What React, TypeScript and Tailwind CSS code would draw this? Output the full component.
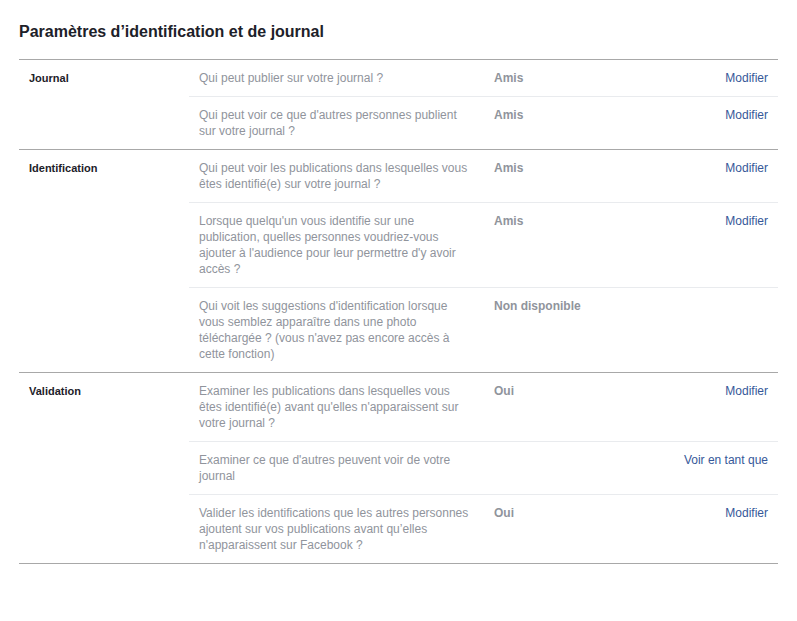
import React from "react";

type Row = { q: string; v?: string; a?: string };
type Section = { label: string; rows: Row[] };

const sections: Section[] = [
  {
    label: "Journal",
    rows: [
      { q: "Qui peut publier sur votre journal ?", v: "Amis", a: "Modifier" },
      { q: "Qui peut voir ce que d'autres personnes publient sur votre journal ?", v: "Amis", a: "Modifier" },
    ],
  },
  {
    label: "Identification",
    rows: [
      { q: "Qui peut voir les publications dans lesquelles vous êtes identifié(e) sur votre journal ?", v: "Amis", a: "Modifier" },
      {
        q: "Lorsque quelqu'un vous identifie sur une publication, quelles personnes voudriez-vous ajouter à l'audience pour leur permettre d'y avoir accès ?",
        v: "Amis",
        a: "Modifier",
      },
      {
        q: "Qui voit les suggestions d'identification lorsque vous semblez apparaître dans une photo téléchargée ? (vous n'avez pas encore accès à cette fonction)",
        v: "Non disponible",
      },
    ],
  },
  {
    label: "Validation",
    rows: [
      {
        q: "Examiner les publications dans lesquelles vous êtes identifié(e) avant qu'elles n'apparaissent sur votre journal ?",
        v: "Oui",
        a: "Modifier",
      },
      { q: "Examiner ce que d'autres peuvent voir de votre journal", a: "Voir en tant que" },
      {
        q: "Valider les identifications que les autres personnes ajoutent sur vos publications avant qu’elles n'apparaissent sur Facebook ?",
        v: "Oui",
        a: "Modifier",
      },
    ],
  },
];

export default function App() {
  return (
    <div
      className="w-[797px] h-[621px] bg-white px-[19px] pt-[22px] text-[12px] leading-[16px]"
      style={{ fontFamily: '"Liberation Sans", Arial, Helvetica, sans-serif' }}
    >
      <h1 className="text-[16px] leading-[20px] font-bold text-[#1d2129] mb-[17px]">
        Paramètres d’identification et de journal
      </h1>
      <div className="border-t border-[#a8a8a8]">
        {sections.map((s) => (
          <div key={s.label} className="flex border-b border-[#a8a8a8]">
            <div className="w-[170px] shrink-0 pl-[10px] pt-[10px] text-[11px] font-bold text-[#1d2129]">{s.label}</div>
            <div className="flex-1 flex flex-col">
              {s.rows.map((r, i) => (
                <div key={i} className={"flex py-[10px] " + (i > 0 ? "border-t border-[#e9ebee]" : "")}>
                  <div className="w-[295px] shrink-0 px-[10px] text-[#90949c]">{r.q}</div>
                  <div className="w-[150px] shrink-0 pl-[10px] font-bold text-[#90949c]">{r.v}</div>
                  <div className="flex-1 pr-[10px] text-right text-[#365899]">{r.a}</div>
                </div>
              ))}
            </div>
          </div>
        ))}
      </div>
    </div>
  );
}
